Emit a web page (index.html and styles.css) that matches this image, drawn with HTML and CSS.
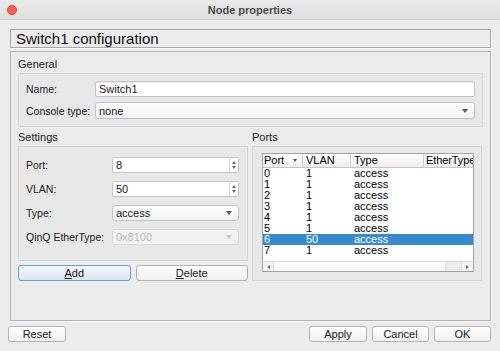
FILE: index.html
```html
<!DOCTYPE html>
<html>
<head>
<meta charset="utf-8">
<title>Node properties</title>
<link rel="stylesheet" href="styles.css">
</head>
<body>
<div class="window">
  <div class="titlebar">
    <div class="lights"><span class="close"></span></div>
    <div class="wtitle">Node properties</div>
    <div></div>
  </div>
  <div class="content">
    <div class="heading">Switch1 configuration</div>
    <div class="frame">
      <div class="gtitle">General</div>
      <div class="group general">
        <span class="lbl">Name:</span>
        <div class="input">Switch1</div>
        <span class="lbl">Console type:</span>
        <div class="combo"><span>none</span><span class="arrow"></span></div>
      </div>
      <div class="columns">
        <div class="col">
          <div class="gtitle">Settings</div>
          <div class="group settings">
            <span class="lbl">Port:</span>
            <div class="spin"><span class="val">8</span><span class="steps"><span class="up"></span><span class="down"></span></span></div>
            <span class="lbl">VLAN:</span>
            <div class="spin"><span class="val">50</span><span class="steps"><span class="up"></span><span class="down"></span></span></div>
            <span class="lbl">Type:</span>
            <div class="combo"><span>access</span><span class="arrow"></span></div>
            <span class="lbl">QinQ EtherType:</span>
            <div class="combo disabled"><span>0x8100</span><span class="arrow"></span></div>
          </div>
          <div class="btnrow">
            <button class="btn default"><u>A</u>dd</button>
            <button class="btn"><u>D</u>elete</button>
          </div>
        </div>
        <div class="col">
          <div class="gtitle">Ports</div>
          <div class="group ports">
            <div class="tree">
              <div class="trow thead">
                <span class="sortcell">Port<span class="sort"></span></span>
                <span>VLAN</span>
                <span>Type</span>
                <span class="ether">EtherType</span>
              </div>
              <div class="trow"><span>0</span><span>1</span><span>access</span><span></span></div>
              <div class="trow"><span>1</span><span>1</span><span>access</span><span></span></div>
              <div class="trow"><span>2</span><span>1</span><span>access</span><span></span></div>
              <div class="trow"><span>3</span><span>1</span><span>access</span><span></span></div>
              <div class="trow"><span>4</span><span>1</span><span>access</span><span></span></div>
              <div class="trow"><span>5</span><span>1</span><span>access</span><span></span></div>
              <div class="trow sel"><span>6</span><span>50</span><span>access</span><span></span></div>
              <div class="trow"><span>7</span><span>1</span><span>access</span><span></span></div>
              <div class="tspacer"></div>
              <div class="hscroll">
                <span class="sbtn left"><span class="tri-l"></span></span>
                <span class="track"></span>
                <span class="thumb"></span>
                <span class="sbtn right"><span class="tri-r"></span></span>
              </div>
            </div>
          </div>
        </div>
      </div>
    </div>
    <div class="footer">
      <button class="btn w58">Reset</button>
      <span class="fill"></span>
      <button class="btn w58">Apply</button>
      <button class="btn w57">Cancel</button>
      <button class="btn w57">OK</button>
    </div>
  </div>
</div>
</body>
</html>
```
FILE: styles.css
```css
* { box-sizing: border-box; }
html, body { margin: 0; padding: 0; }
body {
  font-family: "Liberation Sans", Arial, sans-serif;
  font-size: 11px;
  color: #1a1a1a;
  background: #ececec;
}
.window {
  width: 500px;
  height: 351px;
  background: #ececec;
  overflow: hidden;
}
.titlebar {
  height: 20px;
  display: grid;
  grid-template-columns: 1fr auto 1fr;
  align-items: center;
  background: linear-gradient(#ebebeb, #dedede);
  border-bottom: 1px solid #d0d0d0;
}
.lights { padding-left: 7px; display: flex; align-items: center; }
.close {
  width: 10px;
  height: 10px;
  border-radius: 50%;
  background: #fc5f58;
  border: 1px solid #e2463f;
}
.wtitle {
  font-weight: bold;
  font-size: 11px;
  color: #4a4a4a;
  line-height: 14px;
}
.content {
  padding: 9px 9px 0 8px;
}
.heading {
  margin-left: 2px;
  height: 19px;
  border: 1px solid #a9a9a9;
  box-shadow: 1px 1px 0 #fafafa;
  font-size: 15px;
  line-height: 17px;
  padding-left: 5px;
  color: #111;
}
.frame {
  margin: 3px 0 0 2px;
  height: 270px;
  border: 1px solid #b2b2b2;
  box-shadow: 1px 1px 0 #fafafa;
  padding: 5px 7px 0 7px;
}
.gtitle {
  height: 14px;
  line-height: 14px;
  margin-bottom: 2px;
  color: #222;
}
.group {
  border: 1px solid #d6d6d6;
  background: #e8e8e8;
}
.general {
  display: grid;
  grid-template-columns: 69px 1fr;
  grid-template-rows: 16px 17px;
  row-gap: 5px;
  align-items: center;
  padding: 7px 7px 7px 7px;
}
.lbl { line-height: 14px; color: #222; font-size: 10.5px; white-space: nowrap; }
.input {
  height: 16px;
  background: #fff;
  border: 1px solid #c4c4c4;
  border-radius: 2px;
  box-shadow: inset 0 1px 0 #ececec;
  line-height: 14px;
  padding-left: 3px;
}
.combo {
  height: 100%;
  display: flex;
  align-items: center;
  justify-content: space-between;
  background: linear-gradient(#fefefe, #f1f1f1);
  border: 1px solid #c2c2c2;
  border-radius: 3px;
  padding: 0 6px 0 3px;
  line-height: 14px;
}
.arrow {
  width: 0; height: 0;
  border-left: 3px solid transparent;
  border-right: 3px solid transparent;
  border-top: 4px solid #555;
}
.combo.disabled {
  color: #bebebe;
  background: #f1f1f1;
  border-color: #d8d8d8;
}
.combo.disabled .arrow { border-top-color: #c8c8c8; }
.columns {
  margin-top: 3px;
  display: grid;
  grid-template-columns: 230px 230px;
  column-gap: 4px;
}
.settings {
  display: grid;
  grid-template-columns: 86px 1fr;
  grid-template-rows: repeat(4, 16px);
  row-gap: 8px;
  align-items: center;
  padding: 10px 8px 15px 7px;
}
.spin {
  height: 16px;
  display: flex;
  background: #fff;
  border: 1px solid #c4c4c4;
  border-radius: 2px;
  line-height: 14px;
}
.spin .val { flex: 1; padding-left: 3px; }
.steps {
  width: 9px;
  border-left: 1px solid #d4d4d4;
  display: flex;
  flex-direction: column;
  align-items: center;
  justify-content: center;
  gap: 2px;
}
.up, .down {
  width: 0; height: 0;
  border-left: 2.5px solid transparent;
  border-right: 2.5px solid transparent;
}
.up { border-bottom: 3px solid #666; }
.down { border-top: 3px solid #666; }
.btnrow {
  margin-top: 4px;
  display: grid;
  grid-template-columns: 1fr 1fr;
  column-gap: 5px;
}
.btn {
  height: 16px;
  padding: 0;
  margin: 0;
  font-family: "Liberation Sans", Arial, sans-serif;
  font-size: 11px;
  line-height: 14px;
  color: #1a1a1a;
  border: 1px solid #b4b4b4;
  border-radius: 3px;
  background: linear-gradient(#ffffff, #f0f0f0);
  text-align: center;
}
.btn.default {
  border-color: #6f9ccb;
  background: linear-gradient(#f4f8fb, #dce5ee);
}
.ports {
  padding: 6px 7px 8px 9px;
}
.tree {
  height: 119px;
  border: 1px solid #a2a2a2;
  background: #fff;
  display: flex;
  flex-direction: column;
  overflow: hidden;
}
.trow {
  display: grid;
  grid-template-columns: 40px 48px 73px 60px;
  height: 11px;
  line-height: 11px;
  white-space: nowrap;
  color: #000;
}
.trow span { padding-left: 3px; overflow: hidden; }
.trow span:first-child { padding-left: 1px; }
.thead {
  height: 14px;
  line-height: 13px;
  background: linear-gradient(#ffffff, #eeeeee);
  border-bottom: 1px solid #c6c6c6;
}
.thead span { border-right: 1px solid #d0d0d0; }
.thead span:last-child { border-right: none; }
.thead .ether { padding-left: 2px; letter-spacing: -0.1px; }
.sortcell {
  display: flex;
  align-items: center;
  justify-content: space-between;
  padding-right: 5px;
}
.sort {
  width: 0; height: 0;
  padding: 0 !important;
  border-left: 2.5px solid transparent !important;
  border-right: 2.5px solid transparent !important;
  border-top: 3px solid #555;
}
.trow.sel { background: #3a89c9; color: #fff; }
.tspacer { flex: 1; }
.hscroll {
  height: 10px;
  display: flex;
  border-top: 1px solid #dadada;
  background: #f7f7f7;
}
.sbtn {
  width: 11px;
  display: flex;
  align-items: center;
  justify-content: center;
  background: #f4f4f4;
}
.sbtn.left { border-right: 1px solid #dcdcdc; }
.sbtn.right { width: 12px; border-left: 1px solid #dcdcdc; }
.track { flex: 1; background: #fbfbfb; }
.thumb { width: 16px; background: #ececec; border-left: 1px solid #e0e0e0; }
.tri-l, .tri-r {
  width: 0; height: 0;
  border-top: 2.5px solid transparent;
  border-bottom: 2.5px solid transparent;
}
.tri-l { border-right: 3px solid #777; }
.tri-r { border-left: 3px solid #777; }
.footer {
  margin-top: 5px;
  display: flex;
  column-gap: 5px;
}
.fill { flex: 1; }
.w58 { width: 58px; }
.w57 { width: 57px; }
```
